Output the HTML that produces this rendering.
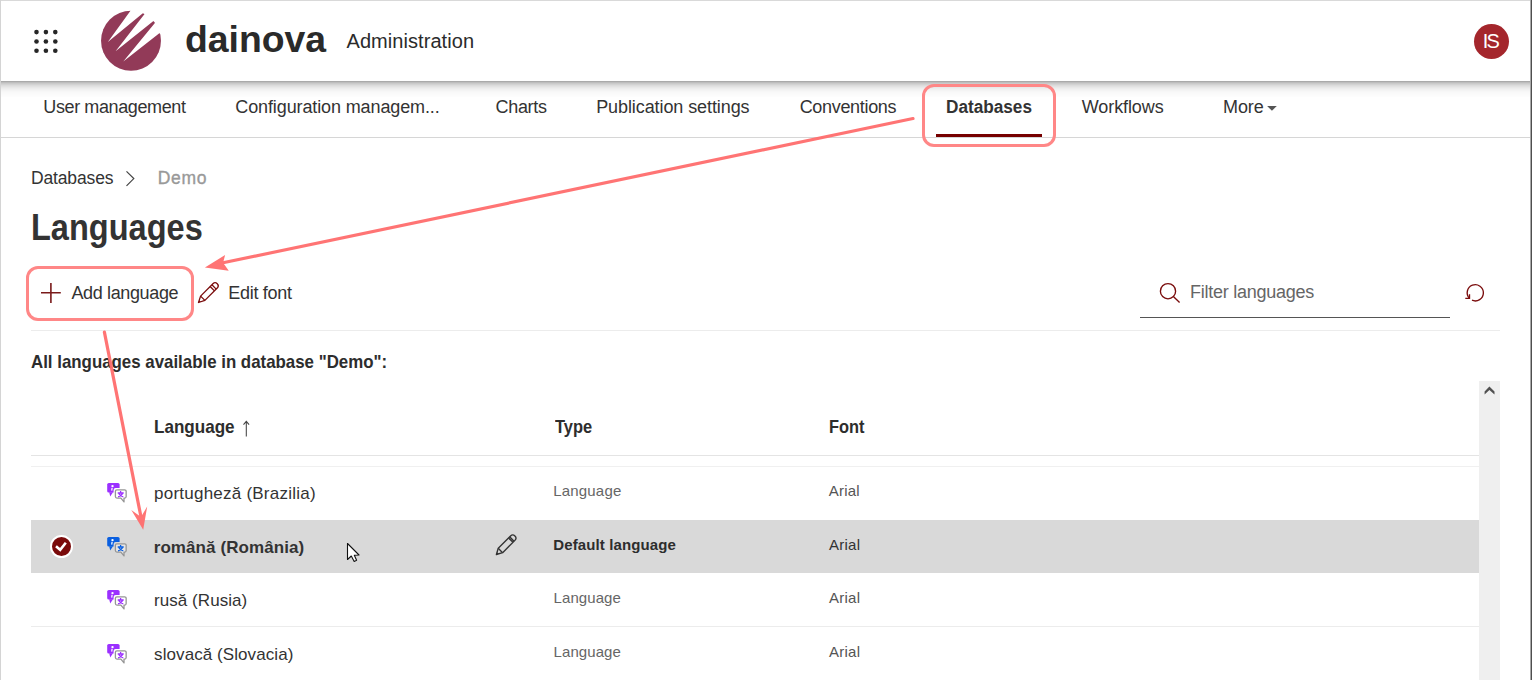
<!DOCTYPE html>
<html><head><meta charset="utf-8"><style>
html,body{margin:0;padding:0;}
body{width:1532px;height:680px;position:relative;overflow:hidden;background:#fff;font-family:"Liberation Sans", sans-serif;}
.abs{position:absolute;}
.t{position:absolute;white-space:nowrap;z-index:5}
</style></head><body>
<!-- frame borders -->
<div class="abs" style="left:0;top:0;width:1532px;height:1px;background:#d9d9d9"></div>
<div class="abs" style="left:0;top:0;width:1px;height:680px;background:#d4d4d4"></div>
<div class="abs" style="left:1530px;top:0;width:1px;height:680px;background:#a8a8a8;z-index:20"></div><div class="abs" style="left:1531px;top:0;width:1px;height:680px;background:#4f4f4f;z-index:20"></div>
<!-- header -->
<div class="abs" style="left:1px;top:81px;width:1529px;height:17px;background:linear-gradient(to bottom,rgba(0,0,0,0.333) 0.5px,rgba(0,0,0,0.259) 1.5px,rgba(0,0,0,0.208) 2.5px,rgba(0,0,0,0.173) 3.5px,rgba(0,0,0,0.137) 4.5px,rgba(0,0,0,0.114) 5.5px,rgba(0,0,0,0.090) 6.5px,rgba(0,0,0,0.071) 7.5px,rgba(0,0,0,0.055) 8.5px,rgba(0,0,0,0.043) 9.5px,rgba(0,0,0,0.031) 10.5px,rgba(0,0,0,0.024) 11.5px,rgba(0,0,0,0.020) 12.5px,rgba(0,0,0,0.016) 13.5px,rgba(0,0,0,0.012) 14.5px,rgba(0,0,0,0.008) 15.5px,rgba(0,0,0,0.000) 16.5px);z-index:2"></div>
<div class="abs" style="z-index:3;left:0;top:0;width:1532px;height:81px">
<svg class="abs" style="left:30px;top:26px" width="32" height="32" viewBox="0 0 32 32">
<g fill="#262626">
<circle cx="6.5" cy="6.1" r="2.3"/><circle cx="15.9" cy="6.1" r="2.3"/><circle cx="25.3" cy="6.1" r="2.3"/>
<circle cx="6.5" cy="15.5" r="2.3"/><circle cx="15.9" cy="15.5" r="2.3"/><circle cx="25.3" cy="15.5" r="2.3"/>
<circle cx="6.5" cy="24.7" r="2.3"/><circle cx="15.9" cy="24.7" r="2.3"/><circle cx="25.3" cy="24.7" r="2.3"/>
</g></svg>
<svg class="abs" style="left:96px;top:6px" width="70" height="70" viewBox="0 0 680 680">
<circle cx="340" cy="338" r="291" fill="#923a58"/>
<path fill="#fff" d="M115,350 L335,45 L310,-40 L540,-40 L455,70 Z"/>
<path fill="#fff" d="M190,440 L470,80 L560,-10 L700,100 L555,148 Z"/>
<path fill="#fff" d="M265,540 L572,165 L700,80 L720,300 L615,265 Z"/>
</svg>
<div class="abs" style="left:1474px;top:24px;width:35px;height:35px;border-radius:50%;background:#a4262c"></div>
</div>
<!-- nav -->
<div class="abs" style="left:1px;top:137px;width:1529px;height:1px;background:#d6d6d6"></div>
<div class="abs" style="left:936px;top:134px;width:106px;height:3px;background:#760000"></div>
<svg class="abs" style="left:1266px;top:104px" width="12" height="8" viewBox="0 0 12 8"><path d="M1.1,2.1 L10.8,2.1 L5.95,6.7 Z" fill="#555"/></svg>
<!-- breadcrumb chevron -->
<svg class="abs" style="left:122px;top:168px" width="16" height="20" viewBox="0 0 16 20"><path d="M4.5,3.3 L11.8,10.6 L4.5,17.9" fill="none" stroke="#444" stroke-width="1.2"/></svg>
<!-- toolbar icons -->
<svg class="abs" style="left:38px;top:280px" width="26" height="26" viewBox="0 0 26 26"><path d="M3,12.8 h19.8 M12.9,3 v20" stroke="#7a1a1a" stroke-width="1.6"/></svg>
<svg class="abs" style="left:195px;top:280px" width="26" height="26" viewBox="0 0 26 26"><g transform="translate(12.87,13.13) rotate(-45)" fill="none" stroke="#7a0c0c" stroke-width="1.3" stroke-linejoin="round">
<path d="M-13.25,0 L-7.25,-3.05 L10.2,-3.05 A3.05,3.05 0 0 1 10.2,3.05 L-7.25,3.05 Z"/>
<path d="M-7.25,-3.05 L-7.25,3.05 M6.25,-3.05 L6.25,3.05 M8.75,-3.05 L8.75,3.05"/>
<path d="M-13.25,0 L-11.05,-1.1284999999999998 L-11.05,1.1284999999999998 Z" fill="#7a0c0c" stroke="none"/>
</g></svg>
<svg class="abs" style="left:1150px;top:275px" width="40" height="35" viewBox="0 0 40 35"><circle cx="18" cy="16.2" r="7.6" fill="none" stroke="#7a0c0c" stroke-width="1.35"/><path d="M23.6,21.8 L29.6,27.6" stroke="#7a0c0c" stroke-width="1.35"/></svg>
<div class="abs" style="left:1140px;top:317px;width:310px;height:1px;background:#555"></div>
<svg class="abs" style="left:1460px;top:278px" width="30" height="30" viewBox="0 0 30 30"><path d="M9.42,20.38 A8.1,8.1 0 1 1 12.0,22.2" fill="none" stroke="#7a0c0c" stroke-width="1.35"/><path d="M5.3,20.3 L9.5,20.3 L9.5,16.2" fill="none" stroke="#7a0c0c" stroke-width="1.35"/></svg>
<div class="abs" style="left:31px;top:330px;width:1469px;height:1px;background:#ececec"></div>
<!-- table -->
<div class="abs" style="left:1479px;top:381px;width:21px;height:299px;background:#efefef"></div>
<svg class="abs" style="left:1479px;top:380px" width="21" height="20" viewBox="0 0 21 20"><path d="M10.4,6.5 L15.5,11.4 L15.5,14.4 L10.4,9.9 L5.6,14.4 L5.6,11.4 Z" fill="#505050"/></svg>
<svg class="abs" style="left:242px;top:418px" width="10" height="20" viewBox="0 0 10 20"><path d="M4.3,3.6 v14.8 M1.5,6.6 L4.3,3.4 L7.1,6.6" fill="none" stroke="#444" stroke-width="1.05"/></svg>
<div class="abs" style="left:31px;top:455px;width:1448px;height:1px;background:#e4e4e4"></div>
<div class="abs" style="left:31px;top:466px;width:1448px;height:1px;background:#f0f0f0"></div>
<div class="abs" style="left:31px;top:520px;width:1448px;height:53px;background:#d9d9d9"></div>
<div class="abs" style="left:31px;top:626px;width:1448px;height:1px;background:#ececec"></div>
<div class="abs" style="left:49.6px;top:534.9px;width:19px;height:19px;border-radius:50%;background:#7a0a0a;border:2px solid #fff"></div>
<svg class="abs" style="left:49px;top:534px" width="24" height="24" viewBox="0 0 24 24"><path d="M7,12.2 L11.2,15.8 L16.8,8.8" fill="none" stroke="#fff" stroke-width="2.6"/></svg>
<svg class="abs" style="left:100px;top:475px" width="30" height="30" viewBox="0 0 30 30">
<rect x="7.2" y="8.0" width="12.4" height="9.5" rx="1.6" fill="#9b30ff"/>
<path d="M9.2,17.2 L10.2,21.6 L13.0,17.2 Z" fill="#9b30ff"/>
<circle cx="12.5" cy="11.1" r="1.2" fill="#fff"/>
<path d="M12.1,12.9 L11.7,15.6" stroke="#fff" stroke-width="1.2" fill="none"/>
<rect x="13.6" y="13.0" width="14" height="11.4" rx="2" fill="#fff"/>
<path d="M16.9,14.8 h7.75 a1.5,1.5 0 0 1 1.5,1.5 v5.25 a1.5,1.5 0 0 1 -1.5,1.5 h-0.65 v3.85 l-3.1,-3.85 h-4.0 a1.5,1.5 0 0 1 -1.5,-1.5 v-5.25 a1.5,1.5 0 0 1 1.5,-1.5 z" fill="#fff" stroke="#969696" stroke-width="1.3" stroke-linejoin="round"/>
<path d="M20.6,15.9 v1.6 M17.7,18.0 h6.0 M18.9,18.6 Q20.4,21.4 23.3,21.8 M22.5,18.6 Q21.0,21.4 18.0,21.8" stroke="#9b30ff" stroke-width="1.3" fill="none"/>
</svg>
<svg class="abs" style="left:100px;top:528.5px" width="30" height="30" viewBox="0 0 30 30">
<rect x="7.2" y="8.0" width="12.4" height="9.5" rx="1.6" fill="#0a5fe0"/>
<path d="M9.2,17.2 L10.2,21.6 L13.0,17.2 Z" fill="#0a5fe0"/>
<circle cx="12.5" cy="11.1" r="1.2" fill="#fff"/>
<path d="M12.1,12.9 L11.7,15.6" stroke="#fff" stroke-width="1.2" fill="none"/>
<rect x="13.6" y="13.0" width="14" height="11.4" rx="2" fill="#d9d9d9"/>
<path d="M16.9,14.8 h7.75 a1.5,1.5 0 0 1 1.5,1.5 v5.25 a1.5,1.5 0 0 1 -1.5,1.5 h-0.65 v3.85 l-3.1,-3.85 h-4.0 a1.5,1.5 0 0 1 -1.5,-1.5 v-5.25 a1.5,1.5 0 0 1 1.5,-1.5 z" fill="rgba(255,255,255,.35)" stroke="#969696" stroke-width="1.3" stroke-linejoin="round"/>
<path d="M20.6,15.9 v1.6 M17.7,18.0 h6.0 M18.9,18.6 Q20.4,21.4 23.3,21.8 M22.5,18.6 Q21.0,21.4 18.0,21.8" stroke="#0a5fe0" stroke-width="1.3" fill="none"/>
</svg>
<svg class="abs" style="left:100px;top:582px" width="30" height="30" viewBox="0 0 30 30">
<rect x="7.2" y="8.0" width="12.4" height="9.5" rx="1.6" fill="#9b30ff"/>
<path d="M9.2,17.2 L10.2,21.6 L13.0,17.2 Z" fill="#9b30ff"/>
<circle cx="12.5" cy="11.1" r="1.2" fill="#fff"/>
<path d="M12.1,12.9 L11.7,15.6" stroke="#fff" stroke-width="1.2" fill="none"/>
<rect x="13.6" y="13.0" width="14" height="11.4" rx="2" fill="#fff"/>
<path d="M16.9,14.8 h7.75 a1.5,1.5 0 0 1 1.5,1.5 v5.25 a1.5,1.5 0 0 1 -1.5,1.5 h-0.65 v3.85 l-3.1,-3.85 h-4.0 a1.5,1.5 0 0 1 -1.5,-1.5 v-5.25 a1.5,1.5 0 0 1 1.5,-1.5 z" fill="#fff" stroke="#969696" stroke-width="1.3" stroke-linejoin="round"/>
<path d="M20.6,15.9 v1.6 M17.7,18.0 h6.0 M18.9,18.6 Q20.4,21.4 23.3,21.8 M22.5,18.6 Q21.0,21.4 18.0,21.8" stroke="#9b30ff" stroke-width="1.3" fill="none"/>
</svg>
<svg class="abs" style="left:100px;top:635.5px" width="30" height="30" viewBox="0 0 30 30">
<rect x="7.2" y="8.0" width="12.4" height="9.5" rx="1.6" fill="#9b30ff"/>
<path d="M9.2,17.2 L10.2,21.6 L13.0,17.2 Z" fill="#9b30ff"/>
<circle cx="12.5" cy="11.1" r="1.2" fill="#fff"/>
<path d="M12.1,12.9 L11.7,15.6" stroke="#fff" stroke-width="1.2" fill="none"/>
<rect x="13.6" y="13.0" width="14" height="11.4" rx="2" fill="#fff"/>
<path d="M16.9,14.8 h7.75 a1.5,1.5 0 0 1 1.5,1.5 v5.25 a1.5,1.5 0 0 1 -1.5,1.5 h-0.65 v3.85 l-3.1,-3.85 h-4.0 a1.5,1.5 0 0 1 -1.5,-1.5 v-5.25 a1.5,1.5 0 0 1 1.5,-1.5 z" fill="#fff" stroke="#969696" stroke-width="1.3" stroke-linejoin="round"/>
<path d="M20.6,15.9 v1.6 M17.7,18.0 h6.0 M18.9,18.6 Q20.4,21.4 23.3,21.8 M22.5,18.6 Q21.0,21.4 18.0,21.8" stroke="#9b30ff" stroke-width="1.3" fill="none"/>
</svg>
<svg class="abs" style="left:488px;top:528px" width="34" height="34" viewBox="0 0 34 34"><g transform="translate(17.66,17.24) rotate(-45)" fill="none" stroke="#333" stroke-width="1.35" stroke-linejoin="round">
<path d="M-13.1,0 L-7.3999999999999995,-3.1 L10.0,-3.1 A3.1,3.1 0 0 1 10.0,3.1 L-7.3999999999999995,3.1 Z"/>
<path d="M-7.3999999999999995,-3.1 L-7.3999999999999995,3.1 M7.200000000000001,-3.1 L7.200000000000001,3.1 M8.799999999999999,-3.1 L8.799999999999999,3.1"/>
<path d="M-13.1,0 L-10.899999999999999,-1.147 L-10.899999999999999,1.147 Z" fill="#333" stroke="none"/>
</g></svg>
<svg class="abs" style="left:340px;top:537px" width="26" height="30" viewBox="0 0 26 30"><path d="M7.5,6.5 L7.5,22.5 L11.3,19 L14.2,24.4 L16.6,23.3 L14.3,18.3 L19,18 Z" fill="#fff" stroke="#111" stroke-width="1.1" stroke-linejoin="round"/></svg>
<!-- text -->
<div class="t" id="dainova" style="left:185.20px;top:20.84px;font-size:37.5px;line-height:37.5px;font-weight:700;color:#2a2a2a;letter-spacing:0.000px;transform:scaleX(0.9958);transform-origin:0 0;">dainova</div>
<div class="t" id="admin" style="left:346.50px;top:30.91px;font-size:20px;line-height:20px;font-weight:400;color:#2b2b2b;letter-spacing:0.062px;">Administration</div>
<div class="t" id="avatar" style="left:1482.70px;top:31.06px;font-size:20px;line-height:20px;font-weight:400;color:#fff;letter-spacing:-1.800px;">IS</div>
<div class="t" id="nav1" style="left:43.30px;top:97.55px;font-size:18px;line-height:18px;font-weight:400;color:#333;letter-spacing:-0.386px;">User management</div>
<div class="t" id="nav2" style="left:235.30px;top:97.55px;font-size:18px;line-height:18px;font-weight:400;color:#333;letter-spacing:-0.117px;">Configuration managem...</div>
<div class="t" id="nav3" style="left:495.60px;top:97.55px;font-size:18px;line-height:18px;font-weight:400;color:#333;letter-spacing:-0.340px;">Charts</div>
<div class="t" id="nav4" style="left:596.20px;top:97.55px;font-size:18px;line-height:18px;font-weight:400;color:#333;letter-spacing:-0.089px;">Publication settings</div>
<div class="t" id="nav5" style="left:799.70px;top:97.55px;font-size:18px;line-height:18px;font-weight:400;color:#333;letter-spacing:-0.320px;">Conventions</div>
<div class="t" id="nav6" style="left:945.70px;top:97.55px;font-size:18px;line-height:18px;font-weight:700;color:#333;letter-spacing:0.000px;transform:scaleX(0.9546);transform-origin:0 0;">Databases</div>
<div class="t" id="nav7" style="left:1081.80px;top:97.55px;font-size:18px;line-height:18px;font-weight:400;color:#333;letter-spacing:-0.100px;">Workflows</div>
<div class="t" id="nav8" style="left:1223.00px;top:97.55px;font-size:18px;line-height:18px;font-weight:400;color:#333;letter-spacing:-0.100px;">More</div>
<div class="t" id="bc1" style="left:30.90px;top:169.78px;font-size:17.5px;line-height:17.5px;font-weight:400;color:#333;letter-spacing:-0.125px;">Databases</div>
<div class="t" id="bc2" style="left:157.70px;top:169.78px;font-size:17.5px;line-height:17.5px;font-weight:400;color:#999;letter-spacing:0.667px;-webkit-text-stroke:0.35px #999;">Demo</div>
<div class="t" id="h1" style="left:31.20px;top:210.21px;font-size:36px;line-height:36px;font-weight:700;color:#333;letter-spacing:0.000px;transform:scaleX(0.9037);transform-origin:0 0;">Languages</div>
<div class="t" id="add" style="left:71.40px;top:283.65px;font-size:18px;line-height:18px;font-weight:400;color:#333;letter-spacing:-0.355px;">Add language</div>
<div class="t" id="edit" style="left:228.20px;top:283.65px;font-size:18px;line-height:18px;font-weight:400;color:#333;letter-spacing:-0.275px;">Edit font</div>
<div class="t" id="filter" style="left:1190.00px;top:282.55px;font-size:18px;line-height:18px;font-weight:400;color:#666;letter-spacing:-0.260px;">Filter languages</div>
<div class="t" id="all" style="left:30.70px;top:353.23px;font-size:18.5px;line-height:18.5px;font-weight:700;color:#2d2d2d;letter-spacing:0.000px;transform:scaleX(0.9113);transform-origin:0 0;">All languages available in database "Demo":</div>
<div class="t" id="thl" style="left:153.70px;top:418.23px;font-size:18.5px;line-height:18.5px;font-weight:700;color:#2d2d2d;letter-spacing:0.000px;transform:scaleX(0.9225);transform-origin:0 0;">Language</div>
<div class="t" id="tht" style="left:554.70px;top:418.13px;font-size:18.5px;line-height:18.5px;font-weight:700;color:#2d2d2d;letter-spacing:0.000px;transform:scaleX(0.8882);transform-origin:0 0;">Type</div>
<div class="t" id="thf" style="left:828.70px;top:418.13px;font-size:18.5px;line-height:18.5px;font-weight:700;color:#2d2d2d;letter-spacing:0.000px;transform:scaleX(0.8872);transform-origin:0 0;">Font</div>
<div class="t" id="r1n" style="left:154.10px;top:484.60px;font-size:17px;line-height:17px;font-weight:400;color:#333;letter-spacing:0.230px;">portugheză (Brazilia)</div>
<div class="t" id="r1t" style="left:553.30px;top:483.40px;font-size:15px;line-height:15px;font-weight:400;color:#666;letter-spacing:0.171px;">Language</div>
<div class="t" id="r1f" style="left:828.70px;top:483.40px;font-size:15px;line-height:15px;font-weight:400;color:#555;letter-spacing:0.250px;">Arial</div>
<div class="t" id="r2n" style="left:153.70px;top:539.20px;font-size:17px;line-height:17px;font-weight:700;color:#333;letter-spacing:0.087px;">română (România)</div>
<div class="t" id="r2t" style="left:553.30px;top:537.09px;font-size:15px;line-height:15px;font-weight:700;color:#2d2d2d;letter-spacing:0.120px;">Default language</div>
<div class="t" id="r2f" style="left:829.00px;top:537.09px;font-size:15px;line-height:15px;font-weight:400;color:#333;letter-spacing:0.250px;">Arial</div>
<div class="t" id="r3n" style="left:154.10px;top:591.50px;font-size:17px;line-height:17px;font-weight:400;color:#333;letter-spacing:0.045px;">rusă (Rusia)</div>
<div class="t" id="r3t" style="left:553.60px;top:589.60px;font-size:15px;line-height:15px;font-weight:400;color:#666;letter-spacing:0.071px;">Language</div>
<div class="t" id="r3f" style="left:829.00px;top:589.60px;font-size:15px;line-height:15px;font-weight:400;color:#555;letter-spacing:0.250px;">Arial</div>
<div class="t" id="r4n" style="left:154.10px;top:645.80px;font-size:17px;line-height:17px;font-weight:400;color:#333;letter-spacing:0.076px;">slovacă (Slovacia)</div>
<div class="t" id="r4t" style="left:553.60px;top:644.19px;font-size:15px;line-height:15px;font-weight:400;color:#666;letter-spacing:0.071px;">Language</div>
<div class="t" id="r4f" style="left:829.00px;top:644.19px;font-size:15px;line-height:15px;font-weight:400;color:#555;letter-spacing:0.250px;">Arial</div>
<!-- annotations -->
<div class="abs" style="left:922px;top:84px;width:128px;height:57px;border:3px solid #ff8787;border-radius:12px;z-index:10"></div>
<div class="abs" style="left:26px;top:266px;width:162px;height:49px;border:3px solid #ff8787;border-radius:12px;z-index:10"></div>
<svg class="abs" style="left:0;top:0;z-index:11" width="1532" height="680" viewBox="0 0 1532 680">
<g fill="#ff6d6d" stroke="none" opacity="0.95">
<path d="M913,118.5 L223,262.8" stroke="#ff6d6d" stroke-width="3.2" stroke-linecap="round"/>
<path d="M204.9,267.4 L225.1,254.9 L223.1,262.8 L228.75,270.7 Z"/>
<path d="M104.4,332.1 L141,517" stroke="#ff6d6d" stroke-width="3.2" stroke-linecap="round"/>
<path d="M143.2,529.8 L131.3,510 L141,517 L147.2,506.5 Z"/>
</g>
</svg>
</body></html>
